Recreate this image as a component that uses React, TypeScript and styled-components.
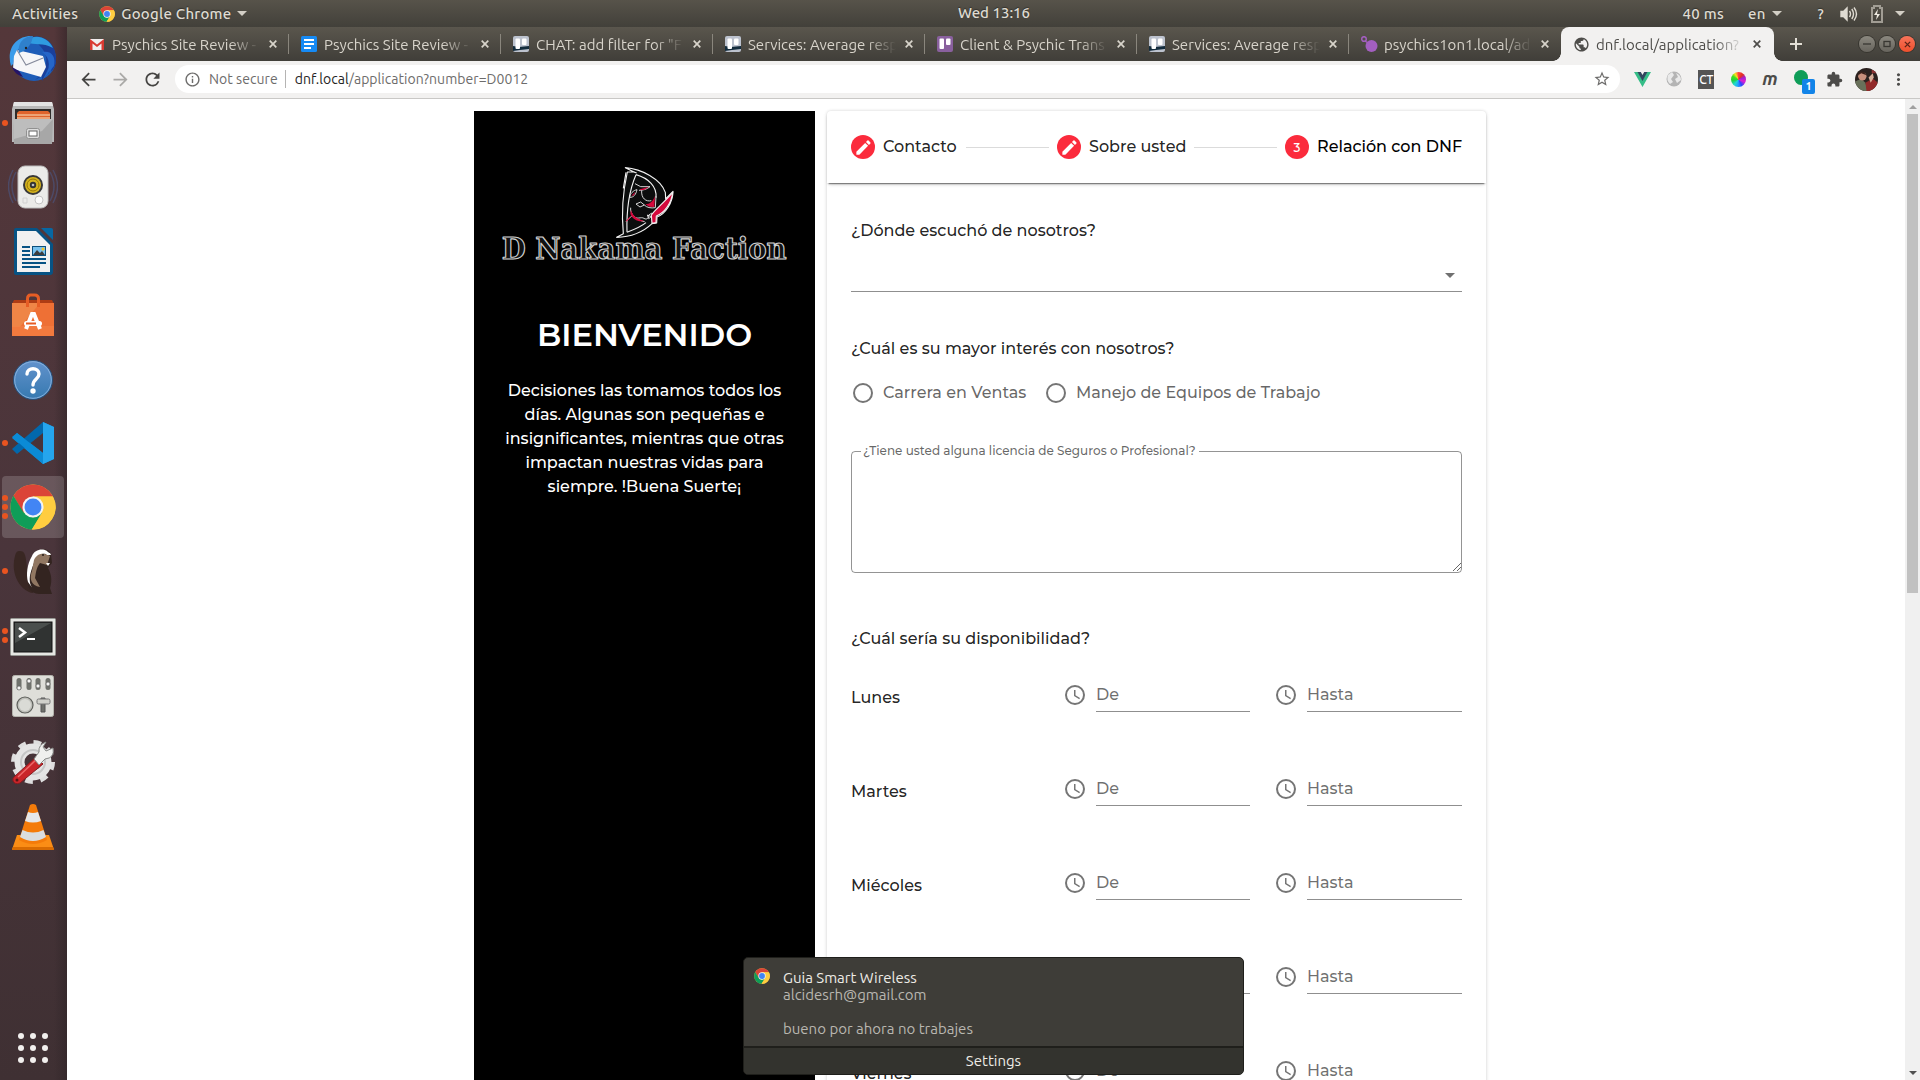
import React from "react";
import styled, { createGlobalStyle } from "styled-components";
import { MdEdit, MdExtension, MdStarBorder, MdArrowBack, MdArrowForward, MdRefresh, MdInfoOutline, MdMoreVert, MdPublic } from "react-icons/md";

const ui = `Ubuntu, "Noto Sans", "Open Sans", sans-serif`;
const body = `Montserrat, Inter, "Open Sans", sans-serif`;

const GlobalStyle = createGlobalStyle`
  * { box-sizing: border-box; }
  body { margin: 0; background: #fff; overflow: hidden; }
  svg { display: block; flex: none; }
`;

const Desktop = styled.div`
  width: 1920px;
  height: 1080px;
  overflow: hidden;
  display: flex;
  flex-direction: column;
  position: relative;
  font-family: ${ui};
`;

/* ---------- system bar ---------- */
const SystemBar = styled.header`
  height: 27px;
  flex: none;
  display: grid;
  grid-template-columns: 958px 1fr auto;
  align-items: center;
  padding: 0 15px 0 12px;
  background: linear-gradient(#57534a, #42403a);
  color: #dfdbd2;
  font-size: 15px;
  font-weight: 500;
  letter-spacing: 0.25px;
  text-shadow: 0 -1px 1px #33312c;
`;
const BarGroup = styled.div`
  display: flex;
  align-items: center;
  height: 27px;
`;
const BarItem = styled.span<{ $left?: number }>`
  margin-left: ${(p) => p.$left ?? 0}px;
  display: flex;
  white-space: nowrap;
`;
const Caret = styled.i<{ $left: number }>`
  margin-left: ${(p) => p.$left}px;
  border: 5px solid transparent;
  border-top-color: #d3cfc6;
  border-bottom: 0;
`;
const Clock = styled.div`
  margin-left: -12px;
  letter-spacing: 0;
  line-height: 26px;
  height: 27px;
`;

/* ---------- dock ---------- */
const Workspace = styled.div`
  flex: 1;
  min-height: 0;
  display: flex;
`;
const Dock = styled.nav`
  width: 67px;
  flex: none;
  display: flex;
  flex-direction: column;
  background: linear-gradient(90deg, transparent 54px, rgba(45, 35, 38, 0.55)),
    linear-gradient(#54373a, #4a353b 50%, #3f3033);
`;
const DockItem = styled.div<{ $active?: boolean; $top?: number; $bottom?: number }>`
  height: 62px;
  margin: 1px 3px 1px 2px;
  padding: ${(p) => p.$top ?? 0}px 0 ${(p) => p.$bottom ?? 0}px;
  border-radius: 4px;
  display: flex;
  align-items: center;
  justify-content: center;
  position: relative;
  background: ${(p) => (p.$active ? "rgba(255,255,255,0.17)" : "transparent")};
`;
const Dots = styled.div`
  position: absolute;
  left: 0;
  top: 0;
  height: 100%;
  display: flex;
  flex-direction: column;
  justify-content: center;
  gap: 3px;
`;
const Dot = styled.i`
  width: 6px;
  height: 6px;
  border-radius: 50%;
  background: #e95420;
`;
const AppGrid = styled.div`
  margin: auto 0 17px 18px;
  display: grid;
  grid-template-columns: repeat(3, 6px);
  gap: 6px;
`;
const AppDot = styled.i`
  width: 6px;
  height: 6px;
  border-radius: 50%;
  background: #f2f0ee;
`;

/* ---------- browser chrome ---------- */
const Browser = styled.main`
  flex: 1;
  min-width: 0;
  display: flex;
  flex-direction: column;
`;
const TabStrip = styled.div`
  height: 34px;
  flex: none;
  display: flex;
  align-items: center;
  padding-left: 11px;
  background: linear-gradient(#5a564d, #403e39);
`;
const Tab = styled.div<{ $active?: boolean; $last?: boolean }>`
  width: ${(p) => (p.$active ? 213 : 212)}px;
  margin-left: ${(p) => (p.$active ? -1 : 0)}px;
  height: 34px;
  flex: none;
  position: relative;
  display: flex;
  align-items: center;
  padding: 0 13px 0 ${(p) => (p.$active ? 12 : 11)}px;
  font-size: 15px;
  border-radius: 8px 8px 0 0;
  color: ${(p) => (p.$active ? "#4e4d4a" : "#d8d4cb")};
  background: ${(p) => (p.$active ? "#f2f1f0" : "transparent")};
  &::after {
    content: "";
    display: ${(p) => (p.$active || p.$last ? "none" : "block")};
    position: absolute;
    right: 1px;
    top: 7px;
    height: 20px;
    width: 1px;
    background: #8a867d;
  }
`;
const TabFoot = styled.i<{ $right?: boolean }>`
  position: absolute;
  bottom: 0;
  ${(p) => (p.$right ? "right: -8px;" : "left: -8px;")}
  width: 8px;
  height: 8px;
  background: radial-gradient(circle at ${(p) => (p.$right ? "100% 0" : "0 0")}, transparent 7.5px, #f2f1f0 8px);
`;
const TabTitle = styled.span`
  flex: 1;
  margin: 0 9px 0 7px;
  overflow: hidden;
  white-space: nowrap;
  mask-image: linear-gradient(90deg, #000 calc(100% - 30px), transparent);
`;
const Favicon = styled.span`
  width: 16px;
  height: 16px;
  flex: none;
`;
const NewTab = styled.div`
  margin-left: 16px;
  color: #e3dfd6;
`;
const WindowButtons = styled.div`
  margin-left: auto;
  margin-right: 5px;
  display: flex;
  gap: 4px;
`;
const WindowButton = styled.i<{ $close?: boolean }>`
  width: 16px;
  height: 16px;
  border-radius: 50%;
  display: flex;
  align-items: center;
  justify-content: center;
  background: ${(p) => (p.$close ? "linear-gradient(#f7745a, #ee4f2c)" : "linear-gradient(#8b887f, #67645d)")};
  box-shadow: 0 0 0 1px #383630;
`;
const Toolbar = styled.div`
  height: 38px;
  flex: none;
  display: flex;
  align-items: center;
  padding: 0 0 1px 11px;
  background: #f2f1f0;
  border-bottom: 1px solid #c9c8c6;
  color: #4c4b49;
`;
const NavIcon = styled.span<{ $dim?: boolean }>`
  width: 32px;
  color: ${(p) => (p.$dim ? "#aaa9a7" : "#454442")};
  display: flex;
`;
const Omnibox = styled.div`
  width: 1445px;
  height: 28px;
  flex: none;
  border-radius: 14px;
  margin-left: 1px;
  padding: 0 9px 0 9px;
  background: #fff;
  display: flex;
  align-items: center;
  font-size: 14px;
  letter-spacing: 0.05px;
  color: #6d6c6b;
  white-space: nowrap;
`;
const Secure = styled.span`
  margin-left: 8px;
  padding-right: 7px;
  margin-right: 9px;
  border-right: 1px solid #b5b4b3;
  line-height: 18px;
`;
const Host = styled.span`
  color: #252423;
`;
const StarSlot = styled.span`
  margin-left: auto;
`;
const Extensions = styled.div`
  display: grid;
  grid-template-columns: repeat(9, 32px);
  align-items: center;
  justify-items: center;
  margin-left: 6px;
`;
const ExtCT = styled.span`
  width: 16px;
  height: 19px;
  background: #555;
  color: #fff;
  font-size: 12px;
  font-weight: 500;
  line-height: 19px;
  text-align: center;
  letter-spacing: -0.5px;
`;
const ExtWheel = styled.span`
  width: 15px;
  height: 15px;
  border-radius: 50%;
  background: conic-gradient(#ff4040, #e03020 40deg, #a020d0 70deg, #e020d0 110deg, #3040ff 150deg, #20a0ff 185deg, #20d8d0 220deg, #20d040 260deg, #40e020 300deg, #ffe020 330deg, #ff4040);
`;
const ExtM = styled.span`
  font-size: 18px;
  font-style: italic;
  font-weight: 700;
  line-height: 20px;
  padding-bottom: 3px;
`;
const ExtChat = styled.span`
  width: 14px;
  height: 15px;
  border-radius: 50%;
  background: #0f9d58;
  position: relative;
  left: -1px;
  top: -2px;
`;
const ExtBadge = styled.b`
  position: absolute;
  left: 8px;
  top: 9px;
  width: 13px;
  height: 15px;
  border-radius: 2px;
  background: #1284e8;
  color: #fff;
  font-size: 11px;
  line-height: 15px;
  text-align: center;
`;

/* ---------- page ---------- */
const Viewport = styled.div`
  flex: 1;
  min-height: 0;
  display: flex;
  background: #fff;
`;
const Page = styled.div`
  flex: 1;
  display: flex;
  align-items: flex-start;
  gap: 12px;
  padding: 12px 0 0 407px;
  overflow: hidden;
  font-family: ${body};
  font-weight: 500;
`;
const Scrollbar = styled.div`
  width: 15px;
  background: #f0f0f0;
  display: flex;
  flex-direction: column;
  align-items: center;
`;
const ScrollArrow = styled.i<{ $down?: boolean }>`
  border: 4px solid transparent;
  ${(p) =>
    p.$down
      ? "border-top-color: #505050; border-bottom: 0; margin: auto 0 5px;"
      : "border-bottom-color: #a0a0a0; border-top: 0; margin: 6px 0 5px;"}
`;
const Thumb = styled.i`
  width: 11px;
  height: 479px;
  background: #c1c1c1;
`;
const Welcome = styled.aside`
  width: 341px;
  height: 1000px;
  flex: none;
  background: #000;
  color: #fff;
  display: flex;
  flex-direction: column;
  align-items: center;
  padding-top: 44px;
  text-align: center;
`;
const WelcomeTitle = styled.h1`
  margin: 45px 0 0;
  font-size: 32px;
  line-height: 40px;
  font-weight: 600;
`;
const WelcomeText = styled.p`
  margin: 24px 24px 0;
  font-size: 16px;
  line-height: 24px;
  white-space: pre-line;
`;
const Card = styled.section`
  width: 659px;
  height: 1010px;
  flex: none;
  border-radius: 4px;
  background: #fff;
  box-shadow: 0 0 3px rgba(0, 0, 0, 0.14), 0 1px 5px rgba(0, 0, 0, 0.08);
  color: rgba(0, 0, 0, 0.87);
  font-size: 16px;
`;
const StepHeader = styled.div`
  height: 72px;
  padding: 0 24px;
  display: flex;
  align-items: center;
  border-radius: 4px 4px 0 0;
  box-shadow: 0 3px 1px -2px rgba(0, 0, 0, 0.3), 0 2px 2px -1px rgba(0, 0, 0, 0.3), 0 3px 4px -2px rgba(0, 0, 0, 0.2);
`;
const Step = styled.div<{ $current?: boolean }>`
  display: flex;
  align-items: center;
  gap: 8px;
  white-space: nowrap;
  color: ${(p) => (p.$current ? "#000" : "rgba(0,0,0,0.87)")};
`;
const StepLabel = styled.span<{ $w: number }>`
  width: ${(p) => p.$w}px;
  padding-bottom: 1px;
`;
const StepBadge = styled.span`
  width: 24px;
  height: 24px;
  flex: none;
  border-radius: 50%;
  background: #fb2b3c;
  color: #fff;
  font-size: 12px;
  display: flex;
  align-items: center;
  justify-content: center;
`;
const StepLine = styled.i`
  flex: 1;
  height: 1px;
  margin: 1px 8px 0;
  background: rgba(0, 0, 0, 0.14);
`;
const FormBody = styled.div`
  padding: 36px 24px 0;
`;
const Question = styled.div<{ $top?: number }>`
  margin-top: ${(p) => p.$top ?? 0}px;
  line-height: 24px;
`;
const Select = styled.div`
  height: 49px;
  margin-bottom: 45px;
  border-bottom: 1px solid rgba(0, 0, 0, 0.44);
  display: flex;
  justify-content: flex-end;
  align-items: flex-end;
  padding: 0 7px 13px 0;
`;
const SelectArrow = styled.i`
  border: 5px solid transparent;
  border-top-color: #707070;
  border-bottom: 0;
`;
const Radios = styled.div`
  display: flex;
  align-items: center;
  height: 24px;
  margin-top: 20px;
  color: rgba(0, 0, 0, 0.6);
`;
const Radio = styled.div<{ $w: number }>`
  width: ${(p) => p.$w}px;
  line-height: 22px;
  white-space: nowrap;
  display: flex;
  align-items: center;
  gap: 10px;
`;
const RadioRing = styled.i`
  width: 20px;
  height: 20px;
  margin-left: 2px;
  border-radius: 50%;
  border: 2px solid #757575;
`;
const Outlined = styled.fieldset`
  height: 130px;
  margin: 38px 0 0;
  padding: 0 0 1px 9px;
  border: 1px solid rgba(0, 0, 0, 0.42);
  border-radius: 4px;
  display: flex;
  flex-direction: column;
  align-items: flex-end;
  justify-content: flex-end;
`;
const Legend = styled.legend`
  width: 338px;
  padding: 0 2px;
  font-size: 12px;
  line-height: 16px;
  color: rgba(0, 0, 0, 0.6);
  white-space: nowrap;
`;
const Schedule = styled.div`
  margin-top: 29px;
`;
const DayRow = styled.div`
  height: 94px;
  display: grid;
  grid-template-columns: 212px 187px 24px 188px;
  align-items: start;
`;
const Day = styled.span`
  padding-top: 6px;
  line-height: 24px;
`;
const TimeSlot = styled.div<{ $col: number }>`
  grid-column: ${(p) => p.$col};
  display: flex;
  gap: 9px;
  align-items: flex-start;
`;
const ClockSlot = styled.span`
  padding-top: 3px;
`;
const TimeField = styled.div`
  flex: 1;
  height: 32px;
  line-height: 29px;
  color: rgba(0, 0, 0, 0.57);
  border-bottom: 1px solid rgba(0, 0, 0, 0.44);
`;

/* ---------- notification ---------- */
const Notification = styled.div`
  position: absolute;
  left: 743px;
  top: 957px;
  width: 501px;
  height: 118px;
  border: 1px solid #1f1f1b;
  border-radius: 5px;
  overflow: hidden;
  background: #3e3d38;
  color: #b9b7b0;
  font-size: 15px;
  display: flex;
  flex-direction: column;
`;
const NoteMain = styled.div`
  flex: 1;
  display: flex;
  gap: 13px;
  padding: 10px 0 0 10px;
`;
const NoteText = styled.div`
  padding-top: 1px;
  line-height: 17px;
  white-space: pre;
`;
const NoteTitle = styled.div`
  color: #eeece6;
`;
const NoteAction = styled.div`
  height: 28px;
  border-top: 2px solid #1f1f1b;
  background: #33332e;
  color: #eeece6;
  text-align: center;
  line-height: 26px;
`;

/* ---------- drawings ---------- */
const ChromeLogo = ({ size }: { size: number }) => (
  <svg width={size} height={size} viewBox="0 0 48 48">
    <circle cx="24" cy="24" r="23.5" fill="#fbc93d" />
    <path d="M3.6 12.3A23.5 23.5 0 0 1 44.4 12.3L44.8 13H24L13.7 30Z" fill="#db4437" />
    <path d="M3.6 12.3A23.5 23.5 0 0 0 22.8 47.5L33.5 29.5 24 35 14 29.5Z" fill="#0f9d58" />
    <path d="M24 13H44.8A23.5 23.5 0 0 1 22.8 47.5L34 30Z" fill="#ffcd40" />
    <circle cx="24" cy="24" r="11" fill="#f4f4f4" />
    <circle cx="24" cy="24" r="8.8" fill="#4285f4" />
  </svg>
);

const Thunderbird = () => (
  <svg width="50" height="50" viewBox="0 0 50 50">
    <circle cx="26" cy="25" r="22" fill="#1e5db8" />
    <path d="M24 3C36 0 49 10 48 26c0 5-2 9-5 12l1-6-4 8 0-5-6 12 0-5-7 4C40 36 42 22 32 12Z" fill="#1a3f9a" />
    <path d="M19 8C24-1 40 2 45 14 35 8 26 12 19 8Z" fill="#2f9be0" />
    <path d="M3 32C-2 15 8 2 23 2l-5 7C10 13 6 21 5 30Z" fill="#3b9cea" />
    <path d="M9 16L35 22 38 33 33 43 5 35 6 22Z" fill="#f6f6f8" />
    <path d="M9 16L18 31 35 24" fill="none" stroke="#858a9b" strokeWidth="1.1" />
    <path d="M11 19C9 8 17 2 25 2c-1 7-5 14-14 17Z" fill="#2f80cc" />
    <circle cx="18" cy="14" r="1.2" fill="#222" />
    <path d="M34 18C43 24 43 35 35 45l11-13C48 23 44 16 34 18Z" fill="#2666c8" />
    <path d="M4 33L11 37 15 43C9 41 6 38 4 33Z" fill="#251466" />
  </svg>
);
const FilesIcon = () => (
  <svg width="42" height="44" viewBox="0 0 42 44">
    <path d="M2 1H40L42 8V41H0V8Z" fill="#b9b9b9" />
    <path d="M2 1H40L41 5H1Z" fill="#e4e4e4" />
    <rect x="3" y="8" width="36" height="13" fill="#2e2c2a" />
    <path d="M5 12l2-2H36l2 2V20H5Z" fill="#e0642c" />
    <path d="M5 14H38M5 17H38" stroke="#fbe3bf" />
    <path d="M1 18H41L40 43H2Z" fill="#a7a7a7" />
    <path d="M1 18H41L30 30 2 38Z" fill="#bdbdbd" />
    <rect x="14.500" y="27.500" width="13" height="10" rx="2" fill="#ddd" stroke="#909090" />
    <rect x="17" y="30" width="8" height="5" fill="#fff" stroke="#666" />
  </svg>
);
const Rhythmbox = () => (
  <svg width="50" height="44" viewBox="0 0 50 44">
    <path d="M8 7Q0 21 8 36M5 5Q-4 21 5 38M42 7Q50 21 42 36M45 5Q54 21 45 38" stroke="#4d4a66" strokeWidth="1.500" fill="none" />
    <rect x="10" y="1" width="30" height="42" rx="7" fill="#ebebe9" stroke="#bcbcbc" />
    <circle cx="25" cy="20" r="10" fill="#383838" />
    <circle cx="25" cy="20" r="8" fill="#d7b51d" />
    <circle cx="25" cy="20" r="6" fill="none" stroke="#957507" />
    <circle cx="25" cy="20" r="3.200" fill="#333" />
    <circle cx="25" cy="20" r="1.300" fill="#bcc0c0" />
    <circle cx="31" cy="35" r="4" fill="#fafafa" stroke="#c4c4c4" />
    <path d="M15 33h4v5h-4Z" fill="none" stroke="#d1d1d1" />
  </svg>
);
const WriterIcon = () => (
  <svg width="41" height="49" viewBox="0 0 41 49">
    <path d="M3 1H24L40 17V45a3 3 0 0 1-3 3H3a2 2 0 0 1-2-2V3a2 2 0 0 1 2-2Z" fill="#075384" />
    <path d="M28 1H38a2 2 0 0 1 2 2V13Z" fill="#0768a3" />
    <path d="M4 4H23L37 18V45H4Z" fill="#f1f1f1" />
    <path d="M9 20h8M9 24h8M9 28h8M9 32h24M9 36h24M9 40h18" stroke="#075384" strokeWidth="2" />
    <rect x="19.500" y="19.500" width="13" height="9" fill="#78c2ef" stroke="#0b507c" />
    <path d="M20 28l4-5 3 3 2-2 3 4Z" fill="#3e3c3c" />
    <circle cx="30" cy="22" r="1.500" fill="#f7c31f" />
  </svg>
);
const SoftwareIcon = () => (
  <svg width="42" height="44" viewBox="0 0 42 44">
    <path d="M2 7H40L42 11H0Z" fill="#ae3c14" />
    <path d="M0 10H42V43H0Z" fill="#ee7035" />
    <path d="M0 10H28L8 34H0Z" fill="#efa05b" opacity=".45" />
    <path d="M0 33H42V43H0Z" fill="#f58145" opacity=".6" />
    <path d="M15.500 14V6q0-4 3-4h4q4 0 4 4v8" fill="none" stroke="#e65d25" strokeWidth="3" />
    <path d="M14 36L20 21h2l6 15" fill="none" stroke="#fff" strokeWidth="4" />
    <rect x="12" y="28" width="18" height="5" rx="2.500" fill="#fff" />
    <path d="M14 30.500h10" stroke="#e65d25" strokeWidth="2" />
  </svg>
);
const HelpIcon = () => (
  <svg width="42" height="42" viewBox="0 0 42 42">
    <defs><linearGradient id="helpFill" x2="0" y2="1"><stop stopColor="#6292cc" /><stop offset="1" stopColor="#3679b0" /></linearGradient></defs>
    <circle cx="21" cy="21" r="19.500" fill="url(#helpFill)" stroke="#294f78" />
    <circle cx="21" cy="21" r="18.300" fill="none" stroke="#86b0dd" />
    <path d="M15 15c0-7 12-7 12 0 0 5-6 5-6 11" fill="none" stroke="#fff" strokeWidth="3.400" strokeLinecap="round" />
    <circle cx="21" cy="32" r="2.700" fill="#fff" />
  </svg>
);
const CodeIcon = () => (
  <svg width="42" height="42" viewBox="0 0 42 42">
    <path d="M31 0L42 5V37L31 42 0 16 5 11 31 31Z" fill="#0b8bd6" />
    <path d="M31 0L0 27 5 32 31 11Z" fill="#0268ad" />
    <path d="M31 0L42 5V37L31 42Z" fill="#25a5ed" />
    <path d="M31 31L5 11 0 15 31 42Z" fill="#0b8bd6" />
    <path d="M31 12.500V29.500L20 21Z" fill="#493339" />
  </svg>
);
const BeaverIcon = () => (
  <svg width="40" height="48" viewBox="0 0 40 48">
    <path d="M7 4C15 4 12 18 16 28L20 46C7 44 -3 26 2 9 3 5 4 4 7 4Z" fill="#392723" />
    <path d="M19 9C24 1 35 0 38 7l1 9-4 5c4 7 4 14 2 20l2 6H26C17 46 14 41 15 32Z" fill="#332420" />
    <path d="M19 9C14 17 13 28 15 35l5 7C13 33 19 22 22 13c5-7 9-7 15-5C34 0 22 1 19 9Z" fill="#fff" />
    <path d="M21 13C24 6 31 5 37 9l-3 9-7-2c-4 5-4 10-5 15l5 9C18 39 16 31 19 24Z" fill="#917762" />
    <path d="M31 5l6 1 1 2-4 0ZM33 16l4 0-2 3Z" fill="#fff" />
    <circle cx="30" cy="8" r="1" fill="#231b18" />
  </svg>
);
const TerminalIcon = () => (
  <svg width="46" height="38" viewBox="0 0 46 38">
    <rect x=".5" y=".5" width="45" height="37" rx="1" fill="#e6e7e3" stroke="#969893" />
    <rect x="4" y="4" width="38" height="30" fill="#303332" stroke="#111" />
    <path d="M5 5H41L5 25Z" fill="#565b59" opacity=".7" />
    <path d="M9 10l6 4.500-6 4.500" stroke="#fff" strokeWidth="2.500" fill="none" />
    <path d="M17 21h8" stroke="#fff" strokeWidth="2" />
  </svg>
);
const TweaksIcon = () => (
  <svg width="42" height="43" viewBox="0 0 42 43">
    <rect x=".5" y=".5" width="41" height="41" rx="2" fill="#deded9" stroke="#b4b4ad" />
    {[7, 17, 26, 36].map((x, i) => (
      <g key={x}>
        <rect x={x - 2.5} y="3" width="5" height="12" rx="2.500" fill="#6f716c" />
        <circle cx={x} cy={[13, 6, 11, 9][i]} r="2" fill="#f5f5f4" stroke="#555" strokeWidth=".6" />
      </g>
    ))}
    <circle cx="13" cy="30" r="8" fill="#bebfb9" stroke="#5d5f5b" strokeWidth="1.200" />
    <circle cx="13" cy="30" r="6" fill="#dadbd6" />
    <path d="M29 23h4v14h-4Z" fill="#6f716c" stroke="#555" />
    <rect x="25" y="24" width="13" height="5" rx="1.500" fill="#d0d1cb" stroke="#777" />
  </svg>
);
const SettingsIcon = () => (
  <svg width="44" height="46" viewBox="0 0 44 46">
    <circle cx="22" cy="22" r="19.500" fill="none" stroke="#dedede" strokeWidth="5" strokeDasharray="7.650 7.650" />
    <circle cx="22" cy="22" r="13.500" fill="none" stroke="#e4e4e4" strokeWidth="10" />
    <circle cx="22" cy="22" r="12" fill="none" stroke="#c5c6c6" strokeWidth="2" />
    <path d="M25 17L32 24 9 43Q4 45 2 41 1 38 4 36Z" fill="#c92529" stroke="#861b20" />
    <path d="M27 18L7 37" stroke="#ee6868" strokeWidth="1.500" />
    <path d="M28 25L23 19 28 12Q27 5 35 2L32 7 35 11 42 8Q44 18 34 19Z" fill="#f0f0ee" stroke="#888a88" />
    <circle cx="6" cy="40" r="1.500" fill="#561416" />
  </svg>
);
const VlcIcon = () => (
  <svg width="42" height="47" viewBox="0 0 42 47">
    <path d="M5 31H37L42 45.500H0Z" fill="#fb8d15" />
    <path d="M0 45L1 43H41L42 46H0Z" fill="#d86b02" />
    <path d="M18 1Q21-1 24 1L35 36Q21 44 7 36Z" fill="#f47b0a" />
    <path d="M16 8Q21 10 26 8L29 17Q21 20 13 17Z" fill="#e6e8e9" />
    <path d="M10.500 26Q21 31 31.500 26L34 33Q21 41 8 33Z" fill="#dadddf" />
  </svg>
);

const Trello = ({ purple }: { purple?: boolean }) => (
  <svg width="16" height="16" viewBox="0 0 16 16">
    <rect width="16" height="16" rx="2" fill={purple ? "#89609e" : "#bcc2ce"} />
    {!purple && <path d="M0 10L6 11 16 10V13L7 14 0 15Z" fill="#132c3d" />}
    <rect x="2.500" y="2.500" width="4.500" height="10.500" rx="1" fill="#fff" />
    <rect x="9" y="2.500" width="4.500" height="6.500" rx="1" fill="#fff" />
  </svg>
);
const Gmail = () => (
  <svg width="16" height="16" viewBox="0 0 16 16">
    <path d="M1 3H15V14H1Z" fill="#f1eeee" />
    <path d="M1 3L8 8.500 15 3V14H12.500V7.500L8 11 3.500 7.500V14H1Z" fill="#d93a31" />
  </svg>
);
const Docs = () => (
  <svg width="16" height="16" viewBox="0 0 16 16">
    <rect width="16" height="16" rx="1.500" fill="#168af4" />
    <path d="M3 4h10M3 8h10M3 12h7" stroke="#fff" strokeWidth="1.800" />
  </svg>
);
const Ball = () => (
  <svg width="17" height="16" viewBox="0 0 17 16">
    <circle cx="10.500" cy="10" r="6" fill="#a35fc0" />
    <circle cx="3" cy="3" r="2.300" fill="none" stroke="#a35fc0" strokeWidth="1.500" />
    <path d="M4 5L7 7" stroke="#a35fc0" strokeWidth="1.500" />
  </svg>
);
const Cross = () => (
  <svg width="8" height="8" viewBox="0 0 8 8" stroke="currentColor" strokeWidth="1.700">
    <path d="M.7.700 7.300 7.300M7.300.700.700 7.300" />
  </svg>
);
const TimeIcon = () => (
  <svg width="24" height="24" viewBox="0 0 24 24" fill="#757575">
    <path d="M12 20a8 8 0 1 0 0-16 8 8 0 0 0 0 16m0-18a10 10 0 1 1 0 20 10 10 0 0 1 0-20m.5 5v5.250l4.500 2.670-.75 1.230L11 13V7z" />
  </svg>
);

const FactionLogo = () => (
  <svg width="310" height="115" viewBox="0 0 930 345" fill="none" stroke="#f2f2f2" strokeWidth="3.400" strokeLinejoin="round">
    <path d="M406 38C455 42 512 72 526 112L527 132 540 118 549 109C549 142 526 178 501 186L500 204 486 206C462 229 424 246 380 247L400 236C394 175 400 105 412 51L432 51Z" fill="#0b0d0d" />
    <path d="M438 59C476 70 501 95 498 128M438 59C418 105 409 165 411 232M432 51L440 54M408 52L400 100M411 232C437 222 455 214 468 203" />
    <path d="M435 86L452 95 480 95C470 103 460 106 447 106M441 104C430 106 420 116 419 127 431 128 438 118 441 104ZM438 147L452 141 463 150 450 156Z" strokeWidth="2.600" />
    <path d="M455 106C453 130 468 141 484 137M463 150C470 158 483 160 496 158L498 124M422 158C419 178 440 196 464 200M408 200L426 182C442 196 452 184 462 190 470 196 478 188 476 180L486 174M472 180L484 185 476 191Z" strokeWidth="2.600" />
    <path d="M548 112C545 145 523 174 499 183L498 203 486 205 484 180C493 166 523 142 548 112Z" fill="#d4083c" />
    <path d="M495 123L493 156 478 155 466 148C480 147 489 139 495 123ZM423 164C427 180 438 190 462 198 444 201 427 193 421 176ZM450 103L477 95 464 104 450 106ZM408 197L421 184 421 189 409 200ZM424 122L436 110 432 121Z" fill="#d4083c" stroke="none" />
    <text x="35" y="313" textLength="855" lengthAdjust="spacingAndGlyphs" fontFamily="DejaVu Serif, serif" fontWeight="700" fontSize="87" fill="#101111" strokeWidth="3.600" stroke="#d0d0d0">D Nakama Faction</text>
  </svg>
);

const dockApps: { icon: React.ReactNode; dots?: number; active?: boolean; top?: number; bottom?: number }[] = [
  { icon: <Thunderbird /> },
  { icon: <FilesIcon />, dots: 1 },
  { icon: <Rhythmbox /> },
  { icon: <WriterIcon /> },
  { icon: <SoftwareIcon /> },
  { icon: <HelpIcon />, top: 2 },
  { icon: <CodeIcon />, dots: 1 },
  { icon: <ChromeLogo size={46} />, dots: 3, active: true },
  { icon: <BeaverIcon />, dots: 1 },
  { icon: <TerminalIcon />, dots: 2, top: 3 },
  { icon: <TweaksIcon />, bottom: 5 },
  { icon: <SettingsIcon /> },
  { icon: <VlcIcon /> },
];

const tabs: { icon: React.ReactNode; title: string }[] = [
  { icon: <Gmail />, title: "Psychics Site Review -" },
  { icon: <Docs />, title: "Psychics Site Review -" },
  { icon: <Trello />, title: 'CHAT: add filter for "F' },
  { icon: <Trello />, title: "Services: Average resp" },
  { icon: <Trello purple />, title: "Client & Psychic Trans" },
  { icon: <Trello />, title: "Services: Average resp" },
  { icon: <Ball />, title: "psychics1on1.local/ad" },
];

const days = ["Lunes", "Martes", "Miécoles", "Jueves", "Viernes"];

const Time = ({ label, col }: { label: string; col: number }) => (
  <TimeSlot $col={col}>
    <ClockSlot><TimeIcon /></ClockSlot>
    <TimeField>{label}</TimeField>
  </TimeSlot>
);

export default function App() {
  return (
    <Desktop>
      <GlobalStyle />
      <SystemBar>
        <BarGroup>
          <BarItem>Activities</BarItem>
          <BarItem $left={21}><ChromeLogo size={16} /></BarItem>
          <BarItem $left={6}>Google Chrome</BarItem>
          <Caret $left={6} />
        </BarGroup>
        <Clock>Wed 13:16</Clock>
        <BarGroup>
          <BarItem>40 ms</BarItem>
          <BarItem $left={24}>en</BarItem>
          <Caret $left={6} />
          <BarItem $left={36}>?</BarItem>
          <BarItem $left={16}>
            <svg width="18" height="18" viewBox="0 0 18 18" fill="none" stroke="#dfdbd2" strokeWidth="1.400">
              <path d="M1 6.500h2.500L7 3v12L3.500 11.500H1Z" fill="#dfdbd2" />
              <path d="M9.500 6q2 3 0 6M11.800 4q3.400 5 0 10M14 2.500q5 6.500 0 13" />
            </svg>
          </BarItem>
          <BarItem $left={12}>
            <svg width="14" height="18" viewBox="0 0 14 18">
              <path d="M4 3V1h6v2h2v14H2V3Z" fill="none" stroke="#a19d94" strokeWidth="2" />
              <path d="M8 4L4 10h3l-1 5 4-6H7Z" fill="#eeeae1" />
            </svg>
          </BarItem>
          <Caret $left={11} />
        </BarGroup>
      </SystemBar>

      <Workspace>
        <Dock>
          {dockApps.map((app, i) => (
            <DockItem key={i} $active={app.active} $top={app.top} $bottom={app.bottom}>
              {app.dots && <Dots>{Array.from({ length: app.dots }, (_, d) => <Dot key={d} />)}</Dots>}
              {app.icon}
            </DockItem>
          ))}
          <AppGrid>{Array.from({ length: 9 }, (_, i) => <AppDot key={i} />)}</AppGrid>
        </Dock>

        <Browser>
          <TabStrip>
            {tabs.map((tab, i) => (
              <Tab key={i} $last={i === tabs.length - 1}>
                <Favicon>{tab.icon}</Favicon>
                <TabTitle>{tab.title}</TabTitle>
                <Cross />
              </Tab>
            ))}
            <Tab $active>
              <TabFoot />
              <Favicon><MdPublic size={17} /></Favicon>
              <TabTitle>dnf.local/application?</TabTitle>
              <Cross />
              <TabFoot $right />
            </Tab>
            <NewTab>
              <svg width="12" height="12" viewBox="0 0 12 12" stroke="currentColor" strokeWidth="2"><path d="M6 0V12M0 6H12" /></svg>
            </NewTab>
            <WindowButtons>
              <WindowButton><svg width="8" height="8" viewBox="0 0 8 8" stroke="#393732" strokeWidth="1.300"><path d="M0 4H8" /></svg></WindowButton>
              <WindowButton><svg width="8" height="8" viewBox="0 0 8 8" stroke="#393732" strokeWidth="1.300" fill="none"><rect x="1" y="1.500" width="6" height="5" /></svg></WindowButton>
              <WindowButton $close><svg width="7" height="7" viewBox="0 0 8 8" stroke="#5f2418" strokeWidth="1.600"><path d="M1 1L7 7M7 1L1 7" /></svg></WindowButton>
            </WindowButtons>
          </TabStrip>

          <Toolbar>
            <NavIcon><MdArrowBack size={21} /></NavIcon>
            <NavIcon $dim><MdArrowForward size={21} /></NavIcon>
            <NavIcon><MdRefresh size={21} /></NavIcon>
            <Omnibox>
              <MdInfoOutline size={17} />
              <Secure>Not secure</Secure>
              <span><Host>dnf.local</Host>/application?number=D0012</span>
              <StarSlot><MdStarBorder size={18} /></StarSlot>
            </Omnibox>
            <Extensions>
              <svg width="17" height="15" viewBox="0 0 17 15">
                <path d="M0 0H4L8.500 8 13 0H17L8.500 15Z" fill="#35bd87" />
                <path d="M3.500 0H6.800L8.500 3 10.200 0H13.500L8.500 9Z" fill="#31475e" />
              </svg>
              <svg width="16" height="16" viewBox="0 0 16 16">
                <circle cx="8" cy="8" r="7.500" fill="#b4b4b4" />
                <path d="M2 4L6 1 8 4 5 8 7 11 4 13Q0 9 2 4ZM10 2Q15 4 15 9L11 12 9 8 12 6Z" fill="#e9e9e9" />
              </svg>
              <ExtCT>CT</ExtCT>
              <ExtWheel />
              <ExtM>m</ExtM>
              <ExtChat><ExtBadge>1</ExtBadge></ExtChat>
              <MdExtension size={17} />
              <svg width="23" height="23" viewBox="0 0 22 22">
                <defs><clipPath id="avatarClip"><circle cx="11" cy="11" r="11" /></clipPath></defs>
                <g clipPath="url(#avatarClip)">
                  <rect width="22" height="22" fill="#2b211f" />
                  <path d="M0 13Q6 9 10 14L12 22H0Z" fill="#68705a" />
                  <path d="M10 14L17 10 22 14V22H11Z" fill="#922a2a" />
                  <circle cx="7" cy="8" r="4" fill="#c78f7c" />
                  <path d="M3 7Q4 2 9 4L11 7 6 5Z" fill="#3b211b" />
                  <path d="M13 9L17 5 18 9 15 14Z" fill="#d5ac98" />
                  <path d="M16 2h5v3h-5Z" fill="#8d3434" />
                </g>
              </svg>
              <MdMoreVert size={19} />
            </Extensions>
          </Toolbar>

          <Viewport>
            <Page>
              <Welcome>
                <FactionLogo />
                <WelcomeTitle>BIENVENIDO</WelcomeTitle>
                <WelcomeText>
                  {"Decisiones las tomamos todos los\ndías. Algunas son pequeñas e\ninsignificantes, mientras que otras\nimpactan nuestras vidas para\nsiempre. !Buena Suerte¡"}
                </WelcomeText>
              </Welcome>
              <Card>
                <StepHeader>
                  <Step><StepBadge><MdEdit size={19} /></StepBadge><StepLabel $w={75}>Contacto</StepLabel></Step>
                  <StepLine />
                  <Step><StepBadge><MdEdit size={19} /></StepBadge><StepLabel $w={97}>Sobre usted</StepLabel></Step>
                  <StepLine />
                  <Step $current><StepBadge>3</StepBadge><StepLabel $w={145}>Relación con DNF</StepLabel></Step>
                </StepHeader>
                <FormBody>
                  <Question>¿Dónde escuchó de nosotros?</Question>
                  <Select><SelectArrow /></Select>
                  <Question>¿Cuál es su mayor interés con nosotros?</Question>
                  <Radios>
                    <Radio $w={193}><RadioRing />Carrera en Ventas</Radio>
                    <Radio $w={300}><RadioRing />Manejo de Equipos de Trabajo</Radio>
                  </Radios>
                  <Outlined>
                    <Legend>¿Tiene usted alguna licencia de Seguros o Profesional?</Legend>
                    <svg width="9" height="9" viewBox="0 0 9 9" stroke="#555" strokeWidth=".9"><path d="M1 9L9 1M5 9L9 5" /></svg>
                  </Outlined>
                  <Question $top={54}>¿Cuál sería su disponibilidad?</Question>
                  <Schedule>
                    {days.map((d) => (
                      <DayRow key={d}>
                        <Day>{d}</Day>
                        <Time label="De" col={2} />
                        <Time label="Hasta" col={4} />
                      </DayRow>
                    ))}
                  </Schedule>
                </FormBody>
              </Card>
            </Page>
            <Scrollbar>
              <ScrollArrow />
              <Thumb />
              <ScrollArrow $down />
            </Scrollbar>
          </Viewport>
        </Browser>
      </Workspace>

      <Notification>
        <NoteMain>
          <ChromeLogo size={16} />
          <NoteText>
            <NoteTitle>Guia Smart Wireless</NoteTitle>
            {"alcidesrh@gmail.com\n\nbueno por ahora no trabajes"}
          </NoteText>
        </NoteMain>
        <NoteAction>Settings</NoteAction>
      </Notification>
    </Desktop>
  );
}
